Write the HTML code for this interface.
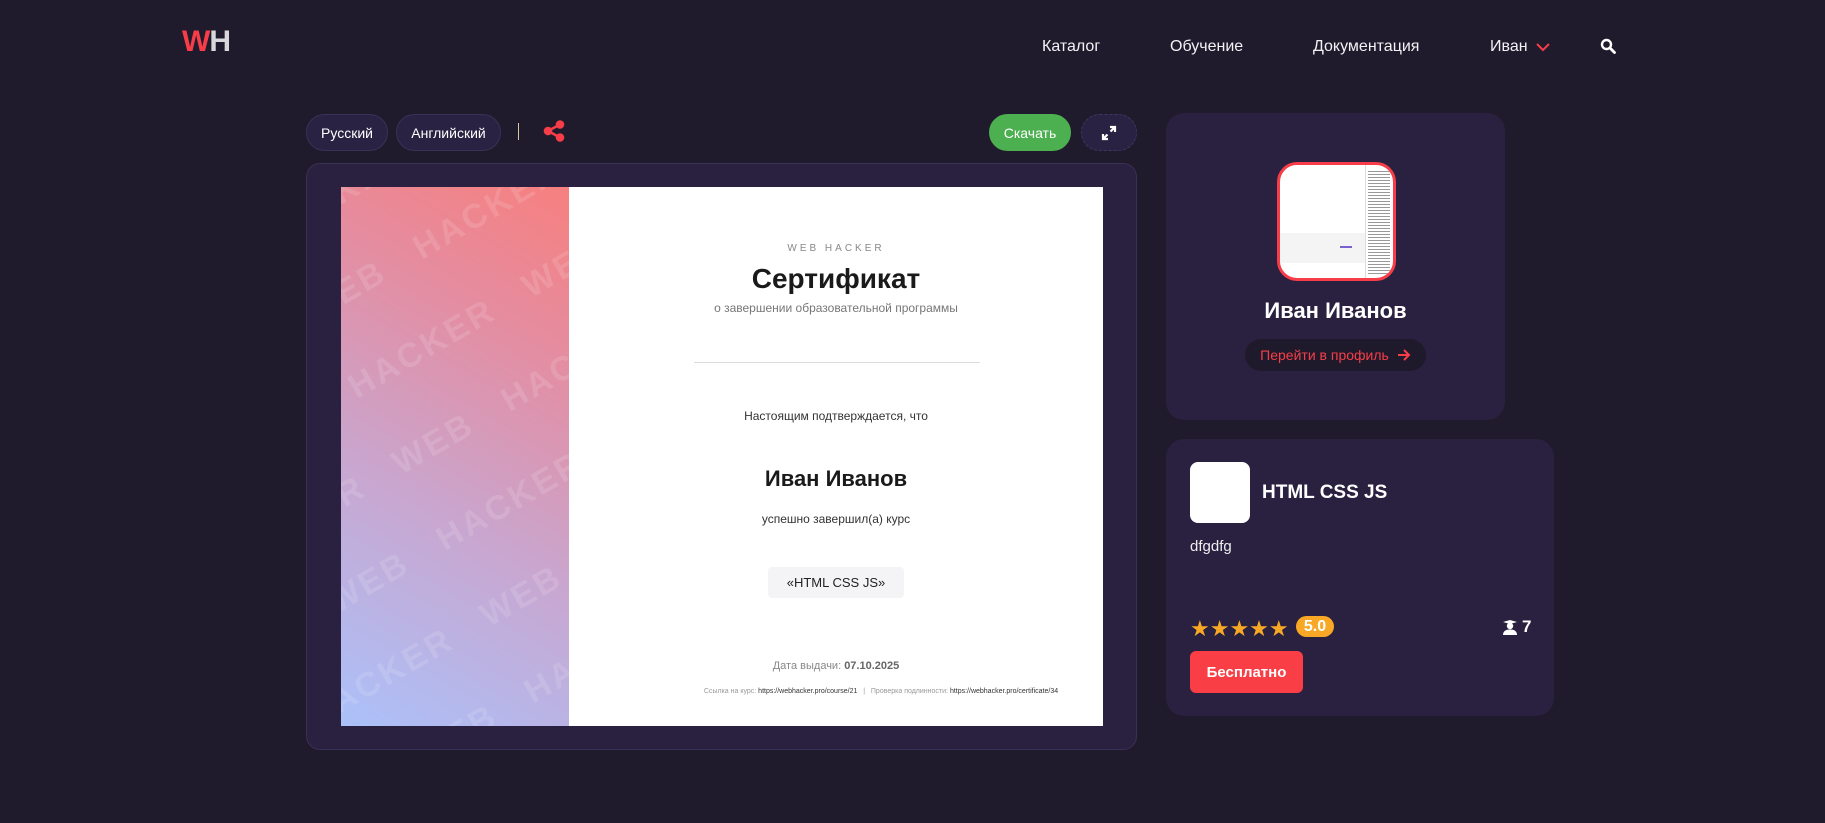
<!DOCTYPE html>
<html><head><meta charset="utf-8"><style>
*{margin:0;padding:0;box-sizing:border-box}
html,body{overflow:hidden}
body{width:1825px;height:823px;background:#201b2c;font-family:"Liberation Sans",sans-serif;color:#fff;position:relative;overflow:hidden}
.abs{position:absolute}
.nav{font-size:16px;color:#f2f2f5;top:38px}
.pill{position:absolute;top:114px;height:37px;border-radius:19px;background:#2a2242;border:1px solid #3a3156;font-size:14px;color:#fff;display:flex;align-items:center;justify-content:center}
.card{position:absolute;background:#2a2140;border-radius:18px}
.cert{position:absolute;left:341px;top:187px;width:762px;height:539px;background:#fff;overflow:hidden}
.strip{position:absolute;left:0;top:0;width:228px;height:539px;background:linear-gradient(30deg,#abc1fa 0%,#c9a6cf 40%,#e58c9f 75%,#f7807f 100%);overflow:hidden}
.wm{position:absolute;left:-260px;top:-160px;width:800px;transform:rotate(-30deg);transform-origin:center;font-weight:bold;font-size:34px;color:rgba(255,255,255,.13);line-height:88px;white-space:nowrap;letter-spacing:3px}
.c{position:absolute;left:228px;width:534px;text-align:center;color:#333}
</style></head><body>
<div class="abs" style="left:182px;top:25px;font-size:30px;font-weight:bold;letter-spacing:-1px"><span style="color:#f73e48">W</span><span style="color:#d8d8dc">H</span></div>
<div class="abs nav" style="left:1042px">Каталог</div>
<div class="abs nav" style="left:1170px">Обучение</div>
<div class="abs nav" style="left:1313px">Документация</div>
<div class="abs nav" style="left:1490px">Иван</div>
<svg class="abs" style="left:1535px;top:42px" width="16" height="10" viewBox="0 0 16 10"><path d="M2 2l6 6 6-6" stroke="#f73e48" stroke-width="2" fill="none"/></svg>
<svg class="abs" style="left:1600px;top:38px" width="16" height="16" viewBox="0 0 16 16"><circle cx="6.5" cy="6.5" r="4.5" stroke="#fff" stroke-width="2.4" fill="none"/><path d="M10 10l4.5 4.5" stroke="#fff" stroke-width="2.8" stroke-linecap="round"/></svg>

<div class="pill" style="left:306px;width:82px">Русский</div>
<div class="pill" style="left:396px;width:105px">Английский</div>
<div class="abs" style="left:518px;top:123px;width:1px;height:17px;background:#d8c8a0"></div>
<svg class="abs" style="left:542px;top:119px" width="24" height="24" viewBox="0 0 24 24"><circle cx="18" cy="5.5" r="4.3" fill="#f73e48"/><circle cx="6" cy="12" r="4.3" fill="#f73e48"/><circle cx="18" cy="18.5" r="4.3" fill="#f73e48"/><path d="M6 12L18 5.5M6 12l12 6.5" stroke="#f73e48" stroke-width="2.5"/></svg>
<div class="pill" style="left:989px;width:82px;background:#4caf50;border-color:#4caf50">Скачать</div>
<div class="pill" style="left:1081px;width:56px;border:1px dashed #3f3560"><svg width="16" height="16" viewBox="0 0 16 16"><path d="M9 2h5v5M14 2L9.5 6.5M7 14H2V9M2 14l4.5-4.5" stroke="#fff" stroke-width="2.2" fill="none"/></svg></div>

<div class="card" style="left:306px;top:163px;width:831px;height:587px;border:1px solid #3a3156;border-radius:14px"></div>
<div class="cert">
 <div class="strip"><div class="wm">
 WEB &nbsp; HACKER &nbsp; WEB &nbsp; HACKER &nbsp; WEB<br>HACKER &nbsp; WEB &nbsp; HACKER &nbsp; WEB &nbsp; HACKER<br>WEB &nbsp; HACKER &nbsp; WEB &nbsp; HACKER &nbsp; WEB<br>HACKER &nbsp; WEB &nbsp; HACKER &nbsp; WEB &nbsp; HACKER<br>WEB &nbsp; HACKER &nbsp; WEB &nbsp; HACKER &nbsp; WEB<br>HACKER &nbsp; WEB &nbsp; HACKER &nbsp; WEB &nbsp; HACKER<br>WEB &nbsp; HACKER &nbsp; WEB &nbsp; HACKER &nbsp; WEB<br>HACKER &nbsp; WEB &nbsp; HACKER &nbsp; WEB &nbsp; HACKER<br>WEB &nbsp; HACKER &nbsp; WEB &nbsp; HACKER &nbsp; WEB<br>HACKER &nbsp; WEB &nbsp; HACKER &nbsp; WEB &nbsp; HACKER
 </div></div>
 <div class="c" style="top:56px;font-size:10px;letter-spacing:3px;color:#888">WEB HACKER</div>
 <div class="c" style="top:76px;font-size:28px;font-weight:bold;color:#1a1a1a">Сертификат</div>
 <div class="c" style="top:114px;font-size:12px;color:#777">о завершении образовательной программы</div>
 <div class="abs" style="left:353px;top:175px;width:286px;height:1px;background:#ddd"></div>
 <div class="c" style="top:222px;font-size:12px">Настоящим подтверждается, что</div>
 <div class="c" style="top:279px;font-size:22px;font-weight:bold;color:#1a1a1a">Иван Иванов</div>
 <div class="c" style="top:325px;font-size:12px">успешно завершил(а) курс</div>
 <div class="abs" style="left:427px;top:380px;width:136px;height:31px;background:#f4f4f6;border-radius:4px;font-size:13px;color:#222;display:flex;align-items:center;justify-content:center">«HTML CSS JS»</div>
 <div class="c" style="top:473px;font-size:11px;color:#888">Дата выдачи: <b style="color:#666">07.10.2025</b></div>
 <div class="abs" style="left:360px;width:360px;text-align:center;top:501px;font-size:7px;color:#999;white-space:nowrap">Ссылка на курс: <span style="color:#333">https://webhacker.pro/course/21</span> &nbsp; | &nbsp; Проверка подлинности: <span style="color:#333">https://webhacker.pro/certificate/34</span></div>
</div>

<div class="card" style="left:1166px;top:113px;width:339px;height:307px"></div>
<div class="abs" style="left:1277px;top:162px;width:119px;height:119px;border:3px solid #f73e48;border-radius:20px;background:#fff;overflow:hidden">
 <div class="abs" style="left:85px;top:0;width:1px;height:119px;background:#ddd"></div>
 <div class="abs" style="left:88px;top:4px;width:22px;height:105px;background:repeating-linear-gradient(#fff 0 2px,#999 2px 3px)"></div>
 <div class="abs" style="left:0;top:68px;width:85px;height:30px;background:#f4f4f4"></div>
 <div class="abs" style="left:60px;top:81px;width:12px;height:2px;background:#7a63d0"></div>
</div>
<div class="abs" style="left:1166px;top:298px;width:339px;text-align:center;font-size:22px;font-weight:bold">Иван Иванов</div>
<div class="abs" style="left:1245px;top:339px;width:181px;height:32px;border-radius:16px;background:#1f1a2b;color:#f73e48;font-size:14px;display:flex;align-items:center;justify-content:center;gap:8px">Перейти в профиль <svg width="14" height="12" viewBox="0 0 14 12"><path d="M1 6h11M7 1l5 5-5 5" stroke="#f73e48" stroke-width="2" fill="none"/></svg></div>

<div class="card" style="left:1166px;top:439px;width:388px;height:277px"></div>
<div class="abs" style="left:1190px;top:462px;width:60px;height:61px;background:#fff;border-radius:8px"></div>
<div class="abs" style="left:1262px;top:482px;font-size:19px;font-weight:bold">HTML CSS JS</div>
<div class="abs" style="left:1190px;top:538px;font-size:15px;color:#eee">dfgdfg</div>
<div class="abs" style="left:1190px;top:616px;font-size:22px;color:#f9a825;letter-spacing:0px">★★★★★</div>
<div class="abs" style="left:1296px;top:616px;width:38px;height:21px;border-radius:11px;background:#f9a825;font-size:16px;font-weight:bold;display:flex;align-items:center;justify-content:center">5.0</div>
<svg class="abs" style="left:1502px;top:619px" width="16" height="16" viewBox="0 0 16 16"><path d="M1 3l7-2 7 2-7 2z" fill="#fff"/><circle cx="8" cy="7" r="3.2" fill="#fff"/><path d="M1 16c0-4 3-5.5 7-5.5s7 1.5 7 5.5z" fill="#fff"/></svg>
<div class="abs" style="left:1522px;top:617px;font-size:17px;font-weight:bold">7</div>
<div class="abs" style="left:1190px;top:651px;width:113px;height:42px;border-radius:6px;background:#fa3e45;font-size:15px;font-weight:bold;display:flex;align-items:center;justify-content:center">Бесплатно</div>
</body></html>
